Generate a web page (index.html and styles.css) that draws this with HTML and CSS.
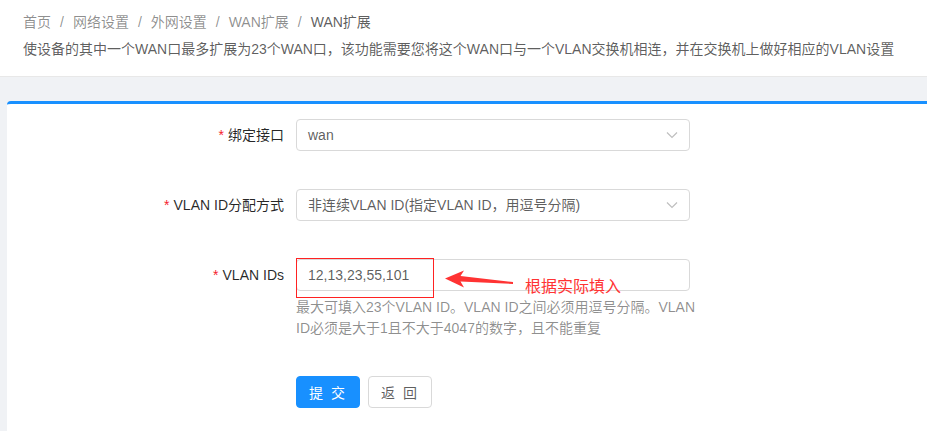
FILE: index.html
```html
<!DOCTYPE html>
<html lang="zh-CN">
<head>
<meta charset="utf-8">
<title>WAN扩展</title>
<link rel="stylesheet" href="styles.css">
</head>
<body>
<div class="page-header">
  <div class="breadcrumb"><span class="crumb">首页</span><span class="sep">/</span><span class="crumb">网络设置</span><span class="sep">/</span><span class="crumb">外网设置</span><span class="sep">/</span><span class="crumb">WAN扩展</span><span class="sep">/</span><span class="crumb current">WAN扩展</span></div>
  <div class="desc">使设备的其中一个WAN口最多扩展为23个WAN口，该功能需要您将这个WAN口与一个VLAN交换机相连，并在交换机上做好相应的VLAN设置</div>
</div>
<div class="content">
  <div class="card">
    <div class="form-row">
      <label class="label"><span class="req">*</span>绑定接口</label>
      <div class="control">
        <div class="select"><span>wan</span>
          <svg class="chev" width="12" height="8" viewBox="0 0 12 8"><path d="M1 1.5 L6 6.5 L11 1.5" fill="none" stroke="#bfbfbf" stroke-width="1.2"/></svg>
        </div>
      </div>
    </div>
    <div class="form-row">
      <label class="label"><span class="req">*</span>VLAN ID分配方式</label>
      <div class="control">
        <div class="select"><span>非连续VLAN ID(指定VLAN ID，用逗号分隔)</span>
          <svg class="chev" width="12" height="8" viewBox="0 0 12 8"><path d="M1 1.5 L6 6.5 L11 1.5" fill="none" stroke="#bfbfbf" stroke-width="1.2"/></svg>
        </div>
      </div>
    </div>
    <div class="form-row row-ids">
      <label class="label"><span class="req">*</span>VLAN IDs</label>
      <div class="control">
        <div class="input-wrap">
          <div class="input">12,13,23,55,101</div>
          <div class="mark-box"></div>
          <div class="note">
            <svg class="arrow" width="72" height="20" viewBox="0 0 72 20"><polygon points="0,8.5 19,0.5 15.5,6 68,12 68,14 15.5,11.5 19,17.5" fill="#f33"/></svg>
            <span class="note-text">根据实际填入</span>
          </div>
        </div>
        <div class="help">最大可填入23个VLAN ID。VLAN ID之间必须用逗号分隔。VLAN<br>ID必须是大于1且不大于4047的数字，且不能重复</div>
      </div>
    </div>
    <div class="form-row actions">
      <div></div>
      <div class="buttons">
        <button class="btn primary">提 交</button>
        <button class="btn">返 回</button>
      </div>
    </div>
  </div>
</div>
</body>
</html>
```
FILE: styles.css
```css
html, body {
  margin: 0;
  height: 100%;
}
body {
  background: #f0f2f5;
  font-family: "Liberation Sans", "Noto Sans CJK SC", sans-serif;
  font-size: 14px;
  color: rgba(0,0,0,0.65);
  overflow: hidden;
}
.page-header {
  background: #fff;
  border-bottom: 1px solid #e8e8e8;
  padding: 11px 23px 0;
  height: 65px;
}
.breadcrumb {
  line-height: 22px;
  height: 22px;
  color: rgba(0,0,0,0.45);
  white-space: nowrap;
}
.breadcrumb .sep {
  margin: 0 9px;
}
.breadcrumb .current {
  color: rgba(0,0,0,0.65);
}
.desc {
  margin-top: 5px;
  line-height: 22px;
  color: rgba(0,0,0,0.65);
  white-space: nowrap;
}
.content {
  padding: 24px 0 0 7px;
  height: calc(100% - 101px);
}
.card {
  background: #fff;
  border-top: 3px solid #1890ff;
  border-top-left-radius: 4px;
  height: 100%;
  padding-top: 15px;
  box-sizing: border-box;
}
.form-row {
  display: grid;
  grid-template-columns: 281px 394px;
  column-gap: 8px;
  margin-bottom: 38px;
}
.label {
  text-align: right;
  padding-right: 4px;
  line-height: 32px;
  height: 32px;
  color: rgba(0,0,0,0.85);
  white-space: nowrap;
}
.req {
  color: #f5222d;
  margin-right: 4px;
  font-family: "Liberation Sans", sans-serif;
}
.select, .input {
  height: 32px;
  box-sizing: border-box;
  border: 1px solid #d9d9d9;
  border-radius: 4px;
  padding: 0 11px;
  line-height: 30px;
  color: rgba(0,0,0,0.65);
  display: flex;
  align-items: center;
  justify-content: space-between;
  white-space: nowrap;
}
.chev {
  flex: none;
}
.input-wrap {
  position: relative;
}
.mark-box {
  position: absolute;
  left: 0;
  top: -1px;
  width: 138px;
  height: 40px;
  box-sizing: border-box;
  border: 1px solid #f22;
}
.note {
  position: absolute;
  left: 149px;
  top: 4px;
  display: flex;
  align-items: center;
}
.arrow {
  display: block;
}
.note-text {
  margin-left: 8px;
  margin-top: 11px;
  font-size: 16px;
  line-height: 22px;
  color: #f33;
  font-family: "Noto Sans CJK SC", sans-serif;
}
.help {
  margin-top: 6px;
  line-height: 21px;
  color: rgba(0,0,0,0.45);
  white-space: nowrap;
}
.row-ids {
  margin-bottom: 37px;
}
.buttons {
  display: flex;
  gap: 8px;
}
.btn {
  width: 64px;
  height: 32px;
  border: 1px solid #d9d9d9;
  border-radius: 4px;
  background: #fff;
  color: rgba(0,0,0,0.65);
  font-family: "Liberation Sans", "Noto Sans CJK SC", sans-serif;
  font-size: 14px;
  padding: 0;
  letter-spacing: 2px;
}
.btn.primary {
  background: #1890ff;
  border-color: #1890ff;
  color: #fff;
}
```
